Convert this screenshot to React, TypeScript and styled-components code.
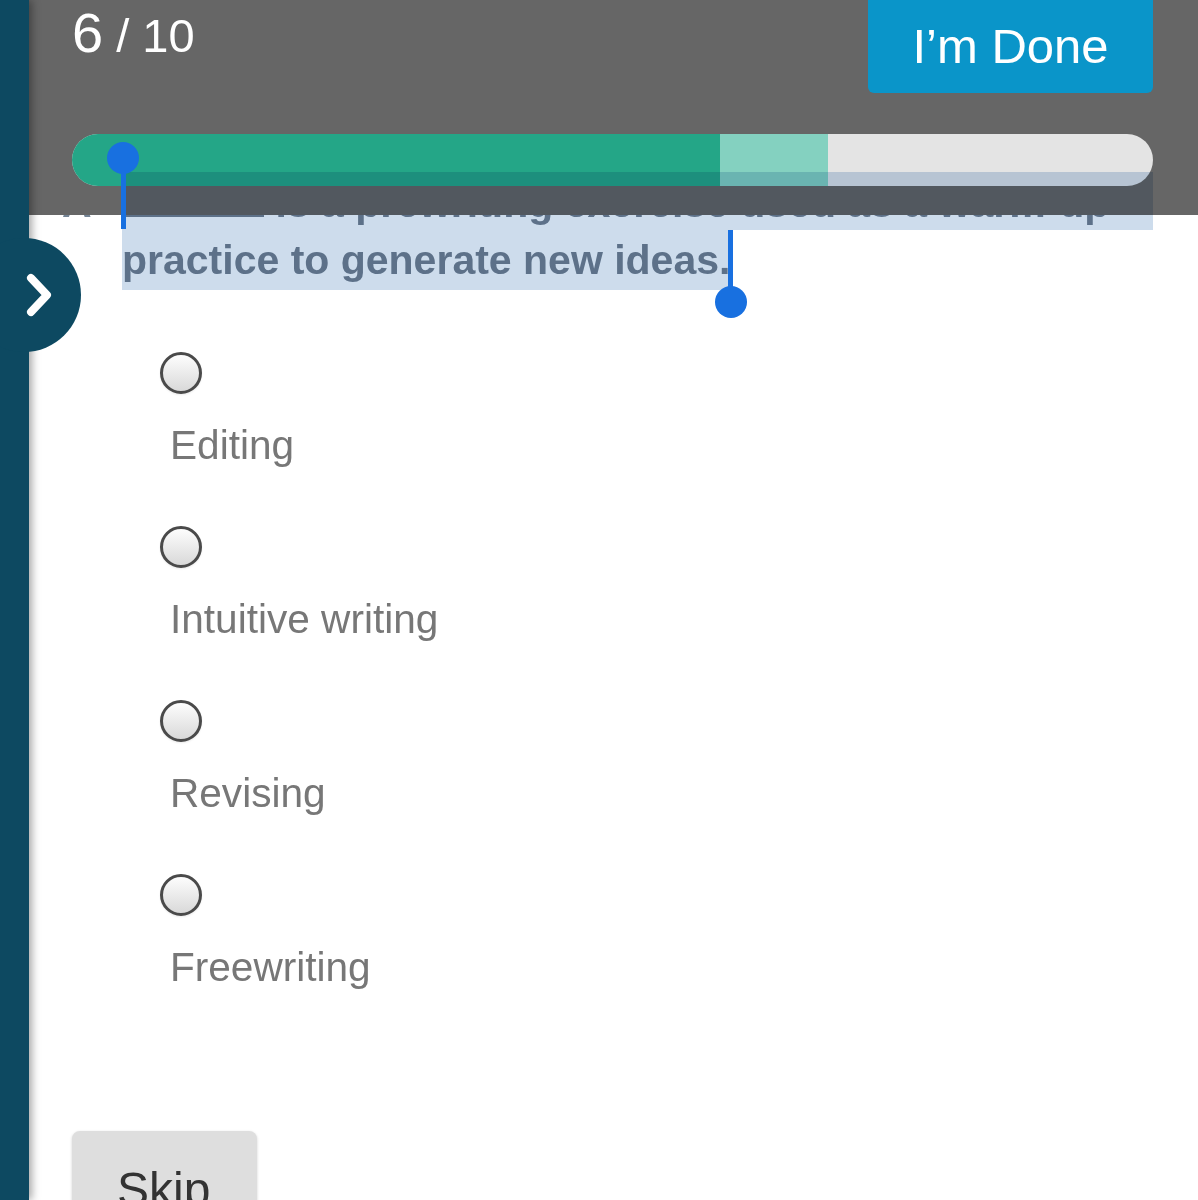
import styled, { createGlobalStyle } from 'styled-components'

const GlobalStyle = createGlobalStyle`
  html, body {
    margin: 0;
    padding: 0;
    background: #fff;
  }
  body {
    font-family: "Liberation Sans", Arial, Helvetica, sans-serif;
  }
`

const Page = styled.div`
  display: flex;
  width: 1198px;
  height: 1200px;
  overflow: hidden;
  background: #fff;
`

const Sidebar = styled.aside`
  position: relative;
  z-index: 5;
  flex: 0 0 29px;
  background: #0d4961;
  box-shadow: 3px 0 8px rgba(0, 0, 0, 0.35);
`

const SideTab = styled.button`
  position: absolute;
  left: -33px;
  top: 238px;
  width: 114px;
  height: 114px;
  padding: 0;
  border: none;
  border-radius: 50%;
  background: #0d4961;
  cursor: pointer;

  svg {
    display: block;
  }
`

const Main = styled.main`
  position: relative;
  flex: 1;
`

const Header = styled.header`
  position: absolute;
  top: 0;
  left: 0;
  right: 0;
  z-index: 2;
  height: 215px;
  box-sizing: border-box;
  padding: 0 45px 0 43px;
  background: #666;
  color: #fff;
`

const TopRow = styled.div`
  display: flex;
  justify-content: space-between;
  align-items: flex-start;
`

const Counter = styled.div`
  margin-top: 5px;
  line-height: 1;
  white-space: pre;
`

const Current = styled.span`
  font-size: 56px;
`

const Total = styled.span`
  font-size: 47px;
`

const DoneButton = styled.button`
  width: 285px;
  height: 93px;
  border: none;
  border-radius: 0 0 6px 6px;
  background: #0a95c9;
  color: #fff;
  font-family: inherit;
  font-size: 49px;
  line-height: 1;
  cursor: pointer;
`

const Progress = styled.div`
  display: flex;
  margin-top: 41px;
  height: 52px;
  border-radius: 26px;
  overflow: hidden;
  background: #e4e4e4;
`

const Segment = styled.div<{ $w: number; $color: string }>`
  flex: 0 0 ${p => p.$w}px;
  background: ${p => p.$color};
`

const Content = styled.div`
  padding: 175px 45px 0 0;
`

const Question = styled.p`
  margin: 0;
  padding-left: 93px;
  text-indent: -60px;
  font-size: 41px;
  font-weight: 700;
  line-height: 57px;
  color: #738394;
`

const Letter = styled.span`
  display: inline-block;
  width: 60px;
  text-indent: 0;
`

const Blank = styled.span`
  display: inline-block;
  width: 142px;
  height: 30px;
  border-bottom: 2px solid #738394;
`

const Options = styled.div`
  display: flex;
  flex-direction: column;
  gap: 57px;
  margin-top: 63px;
  padding-left: 131px;
`

const Option = styled.label`
  display: flex;
  flex-direction: column;
  align-items: flex-start;
  gap: 27px;
  cursor: pointer;
`

const Radio = styled.span`
  box-sizing: border-box;
  width: 42px;
  height: 42px;
  border: 3px solid #4a4a4a;
  border-radius: 50%;
  background: linear-gradient(#fdfdfd, #d9d9d9);
  box-shadow: 0 1px 2px rgba(0, 0, 0, 0.08);
`

const OptionText = styled.span`
  margin-left: 10px;
  font-size: 40.6px;
  line-height: 48px;
  color: #777;
`

const SkipButton = styled.button`
  display: block;
  margin: 140px 0 0 43px;
  width: 185px;
  height: 110px;
  box-sizing: border-box;
  padding: 8px 0 0 45px;
  border: none;
  border-radius: 8px;
  background: #dedede;
  box-shadow: 0 1px 3px rgba(0, 0, 0, 0.18);
  color: #333;
  font-family: inherit;
  font-size: 48px;
  line-height: 1;
  text-align: left;
  vertical-align: top;
`

// iOS-style text selection painted over the question and header
const Highlight = styled.div<{ $l: number; $t: number; $w: number; $h: number }>`
  position: absolute;
  z-index: 3;
  left: ${p => p.$l}px;
  top: ${p => p.$t}px;
  width: ${p => p.$w}px;
  height: ${p => p.$h}px;
  background: #cddcec;
  mix-blend-mode: multiply;
  pointer-events: none;
`

const Stem = styled.div<{ $l: number; $t: number; $h: number }>`
  position: absolute;
  z-index: 4;
  left: ${p => p.$l}px;
  top: ${p => p.$t}px;
  width: 5px;
  height: ${p => p.$h}px;
  background: #1870e0;
`

const Knob = styled.div<{ $l: number; $t: number }>`
  position: absolute;
  z-index: 4;
  left: ${p => p.$l}px;
  top: ${p => p.$t}px;
  width: 32px;
  height: 32px;
  border-radius: 50%;
  background: #1870e0;
`

const options = ['Editing', 'Intuitive writing', 'Revising', 'Freewriting']

export default function App() {
  return (
    <Page>
      <GlobalStyle />
      <Sidebar>
        <SideTab aria-label="Open menu">
          <svg width="114" height="114" viewBox="0 0 114 114">
            <polyline
              points="64,40 80,57 64,74"
              fill="none"
              stroke="#fff"
              strokeWidth="8"
              strokeLinecap="round"
              strokeLinejoin="round"
            />
          </svg>
        </SideTab>
      </Sidebar>

      <Main>
        <Header>
          <TopRow>
            <Counter>
              <Current>6</Current>
              <Total> / 10</Total>
            </Counter>
            <DoneButton>I’m Done</DoneButton>
          </TopRow>
          <Progress>
            <Segment $w={648} $color="#24a687" />
            <Segment $w={108} $color="#84d1c0" />
          </Progress>
        </Header>

        <Content>
          <Question>
            <Letter>A</Letter>
            <Blank /> is a prewriting exercise used as a warm-up practice to generate new ideas.
          </Question>

          <Options>
            {options.map(o => (
              <Option key={o}>
                <Radio />
                <OptionText>{o}</OptionText>
              </Option>
            ))}
          </Options>

          <SkipButton>Skip</SkipButton>
        </Content>

        <Highlight $l={93} $t={172} $w={1031} $h={58} />
        <Highlight $l={93} $t={230} $w={608} $h={60} />
        <Knob $l={78} $t={142} />
        <Stem $l={92} $t={158} $h={71} />
        <Stem $l={699} $t={230} $h={65} />
        <Knob $l={686} $t={286} />
      </Main>
    </Page>
  )
}
